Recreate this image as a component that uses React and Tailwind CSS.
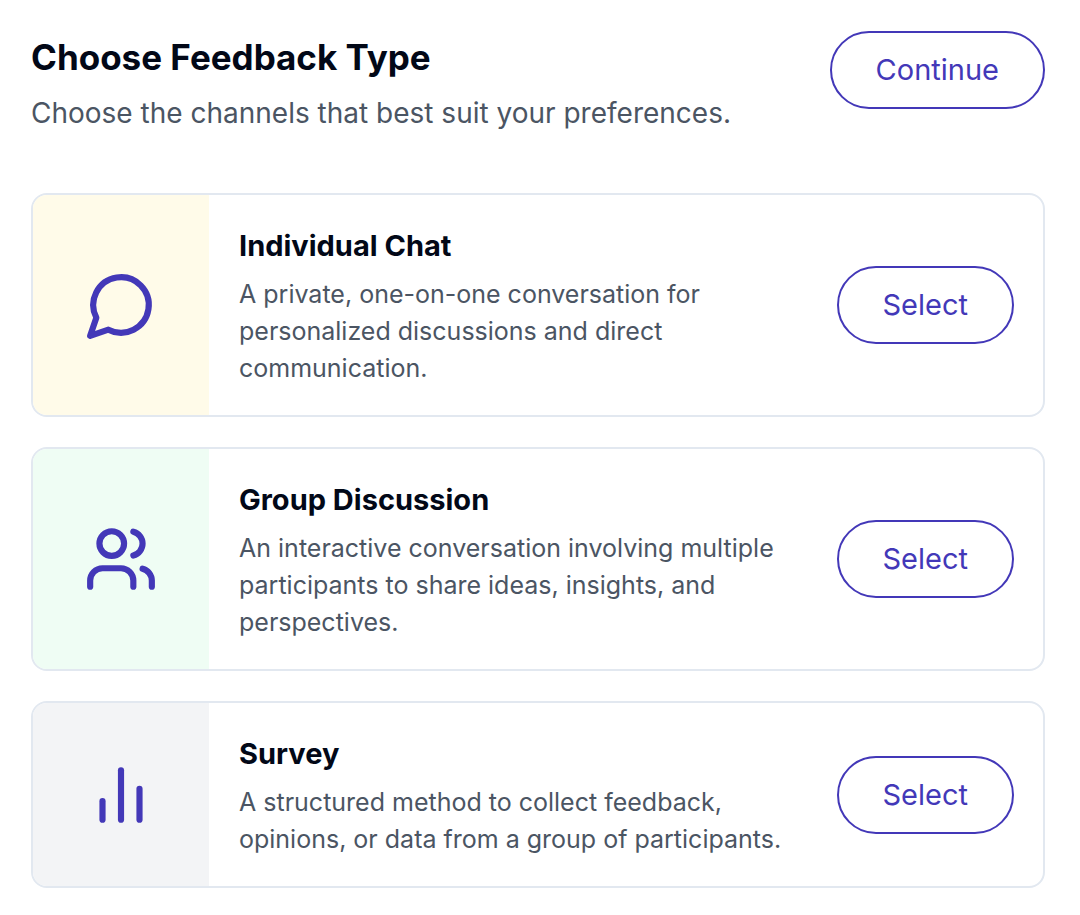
import { Users } from 'lucide-react'

const iconProps = {
  viewBox: '0 0 24 24',
  fill: 'none',
  stroke: 'currentColor',
  strokeWidth: 2,
  strokeLinecap: 'round',
  strokeLinejoin: 'round',
  'aria-hidden': true,
}

function ChatIcon({ className }) {
  return (
    <svg {...iconProps} className={className}>
      <path d="M7.9 20A9 9 0 1 0 4 16.1L2 22Z" />
    </svg>
  )
}

function BarsIcon({ className }) {
  return (
    <svg {...iconProps} className={className}>
      <path d="M18 20V10" />
      <path d="M12 20V4" />
      <path d="M6 20v-6" />
    </svg>
  )
}

const feedbackTypes = [
  {
    title: 'Individual Chat',
    description:
      'A private, one-on-one conversation for personalized discussions and direct communication.',
    icon: ChatIcon,
    bg: 'bg-[#fffbe9]',
  },
  {
    title: 'Group Discussion',
    description:
      'An interactive conversation involving multiple participants to share ideas, insights, and perspectives.',
    icon: Users,
    bg: 'bg-[#effdf4]',
  },
  {
    title: 'Survey',
    description:
      'A structured method to collect feedback, opinions, or data from a group of participants.',
    icon: BarsIcon,
    bg: 'bg-[#f3f4f6]',
  },
]

function OutlineButton({ children, ...props }) {
  return (
    <button
      type="button"
      className="h-[78px] shrink-0 rounded-full border-2 border-[#4338b8] px-11 text-[29px] text-[#4338b8] hover:bg-indigo-50 transition-colors"
      {...props}
    >
      {children}
    </button>
  )
}

function FeedbackCard({ type }) {
  const Icon = type.icon

  return (
    <li className="flex overflow-hidden rounded-2xl border-2 border-[#e2e8f0]">
      <div className={`flex w-44 shrink-0 items-center justify-center ${type.bg}`}>
        <Icon className="size-[74px] text-[#4338b8]" />
      </div>
      <div className="flex flex-1 items-center justify-between gap-6 pr-[29px] pl-[30px]">
        <div className="pt-[31px] pb-7">
          <h2 className="text-[29px] leading-[40px] font-bold text-[#020817]">{type.title}</h2>
          <p className="mt-[10px] text-[25px] leading-[37px] text-[#4b5563]">{type.description}</p>
        </div>
        <OutlineButton aria-label={`Select ${type.title}`}>Select</OutlineButton>
      </div>
    </li>
  )
}

export default function App() {
  return (
    <main className="bg-white pt-[31px] pr-[35px] pb-7 pl-[31px] font-['Inter',sans-serif]">
      <header className="flex items-start justify-between gap-6">
        <div>
          <h1 className="text-[35px] leading-[52px] font-bold text-[#020817]">
            Choose Feedback Type
          </h1>
          <p className="mt-[9px] text-[28px] leading-[42px] text-[#4b5563]">
            Choose the channels that best suit your preferences.
          </p>
        </div>
        <OutlineButton>Continue</OutlineButton>
      </header>

      <ul className="mt-[59px] flex flex-col gap-[30px]">
        {feedbackTypes.map((type) => (
          <FeedbackCard key={type.title} type={type} />
        ))}
      </ul>
    </main>
  )
}
